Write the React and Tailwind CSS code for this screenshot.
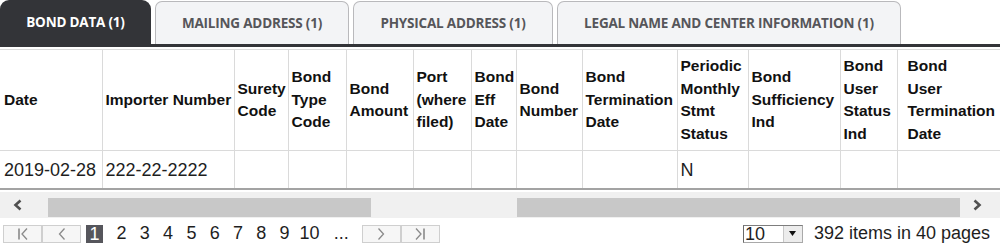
import React from 'react';

const tabs = [
  { label: 'BOND DATA (1)', w: 'w-[151px]', active: true },
  { label: 'MAILING ADDRESS (1)', w: 'w-[194px]' },
  { label: 'PHYSICAL ADDRESS (1)', w: 'w-[200px]' },
  { label: 'LEGAL NAME AND CENTER INFORMATION (1)', w: 'w-[344px]' },
];

const columns = [
  { title: 'Date', w: 'w-[102px]', nowrap: true, first: true },
  { title: 'Importer Number', w: 'w-[132px]', nowrap: true },
  { title: 'Surety Code', w: 'w-[54px]' },
  { title: 'Bond Type Code', w: 'w-[58px]' },
  { title: 'Bond Amount', w: 'w-[67px]' },
  { title: 'Port (where filed)', w: 'w-[58px]' },
  { title: 'Bond Eff Date', w: 'w-[45px]' },
  { title: 'Bond Number', w: 'w-[66px]' },
  { title: 'Bond Termination Date', w: 'w-[95px]' },
  { title: 'Periodic Monthly Stmt Status', w: 'w-[71px]' },
  { title: 'Bond Sufficiency Ind', w: 'w-[92px]' },
  { title: 'Bond User Status Ind', w: 'w-[57px]' },
  { title: 'Bond User Termination Date', w: 'w-[103px]', last: true },
];

const row = ['2019-02-28', '222-22-2222', '', '', '', '', '', '', '', 'N', '', '', ''];

const Chevron = ({ dir = 'left' }) => (
  <svg width="12" height="12" viewBox="0 0 12 12">
    <path
      d={dir === 'left' ? 'M8.5 1.5 L3.5 6 L8.5 10.5' : 'M3.5 1.5 L8.5 6 L3.5 10.5'}
      fill="none"
      stroke="currentColor"
      strokeWidth="2.6"
    />
  </svg>
);

const PagerIcon = ({ kind }) => (
  <svg width="14" height="14" viewBox="0 0 14 14" className="text-[#8a8a8a]">
    {kind === 'first' && (
      <>
        <path d="M3 1.5 V12.5" stroke="currentColor" strokeWidth="1.6" />
        <path d="M11 1.5 L6 7 L11 12.5" fill="none" stroke="currentColor" strokeWidth="1.3" />
      </>
    )}
    {kind === 'prev' && <path d="M9.5 1.5 L4.5 7 L9.5 12.5" fill="none" stroke="currentColor" strokeWidth="1.3" />}
    {kind === 'next' && <path d="M4.5 1.5 L9.5 7 L4.5 12.5" fill="none" stroke="currentColor" strokeWidth="1.3" />}
    {kind === 'last' && (
      <>
        <path d="M3 1.5 L8 7 L3 12.5" fill="none" stroke="currentColor" strokeWidth="1.3" />
        <path d="M11 1.5 V12.5" stroke="currentColor" strokeWidth="1.6" />
      </>
    )}
  </svg>
);

const PagerButton = ({ kind }) => (
  <button className="w-[39px] h-[18px] flex items-center justify-center bg-[#f6f6f6] border border-[#cfcfcf]">
    <PagerIcon kind={kind} />
  </button>
);

export default function App() {
  return (
    <div className="w-[1000px] h-[247px] bg-white overflow-hidden font-['Liberation_Sans',Arial,sans-serif]">
      {/* tabs */}
      <div className="flex items-end gap-[4px] h-[44px]">
        {tabs.map((t) =>
          t.active ? (
            <div
              key={t.label}
              className={`${t.w} h-[44px] rounded-t-[9px] bg-[#333438] text-white flex items-center justify-center font-['Open_Sans',sans-serif] font-bold text-[13.5px] tracking-[-0.2px]`}
            >
              {t.label}
            </div>
          ) : (
            <div
              key={t.label}
              className={`${t.w} h-[43px] rounded-t-[7px] bg-[#f3f4f6] border border-b-0 border-[#b9b9bc] text-[#56565a] flex items-center justify-center font-['Open_Sans',sans-serif] font-bold text-[13.5px] tracking-[-0.2px]`}
            >
              {t.label}
            </div>
          )
        )}
      </div>
      <div className="h-[3px] bg-[#333438]" />

      {/* grid */}
      <div className="mt-[2px] w-[1000px] overflow-hidden">
        <table className="table-fixed border-collapse w-[1000px]">
          <colgroup>
            {columns.map((c) => (
              <col key={c.title} className={c.w} />
            ))}
          </colgroup>
          <thead>
            <tr className="h-[101px]">
              {columns.map((c) => (
                <th
                  key={c.title}
                  className={`text-left align-middle border-t border-b border-[#dadada] ${
                    c.first ? 'pl-[4px]' : 'border-l pl-[3px]'
                  } ${c.last ? 'pl-[10px]' : ''} pr-[1px]`}
                >
                  <div
                    className={`font-['Liberation_Sans',Arial,sans-serif] font-bold text-[15.5px] leading-[22.5px] text-[#111] ${
                      c.nowrap ? 'whitespace-nowrap' : ''
                    } ${c.last ? 'w-[70px]' : ''}`}
                  >
                    {c.title}
                  </div>
                </th>
              ))}
            </tr>
          </thead>
          <tbody>
            <tr className="h-[38px]">
              {row.map((v, i) => (
                <td
                  key={i}
                  className={`align-middle pt-[2px] text-[18px] leading-[22px] text-[#1e1e1e] border-b-2 border-b-[#a3a3a3] ${
                    i === 0 ? 'pl-[4px]' : 'border-l border-l-[#dadada] pl-[3px]'
                  } whitespace-nowrap overflow-hidden`}
                >
                  {v}
                </td>
              ))}
            </tr>
          </tbody>
        </table>
      </div>

      {/* horizontal scrollbar */}
      <div className="mt-[2px] h-[26px] bg-[#f0f0f0] flex items-stretch">
        <div className="w-[48px] flex items-center pl-[12px] text-[#505050]">
          <Chevron dir="left" />
        </div>
        <div className="w-[912px] flex items-end pb-[1px]">
          <div className="w-[323px] h-[19px] bg-[#c8c8c8]" />
          <div className="w-[146px] h-[19px]" />
          <div className="w-[443px] h-[19px] bg-[#c8c8c8]" />
        </div>
        <div className="w-[40px] flex items-center pl-[11px] text-[#505050]">
          <Chevron dir="right" />
        </div>
      </div>

      {/* pager */}
      <div className="mt-[7px] h-[18px] flex items-center pl-[3px] pr-[10px] text-[18px] leading-[18px] text-[#1e1e1e]">
        <div className="flex">
          <PagerButton kind="first" />
          <PagerButton kind="prev" />
        </div>
        <div className="ml-[5px] flex items-center">
          <span className="h-[18px] px-[3.5px] bg-[#56565c] text-white leading-[19px] mr-[10px]">1</span>
          <div className="flex items-center gap-[6.3px]">
            {['2', '3', '4', '5', '6', '7', '8', '9', '10'].map((n) => (
              <span key={n} className="min-w-[17px] text-center leading-[19px]">
                {n}
              </span>
            ))}
            <span className="ml-[8px] leading-[19px]">...</span>
          </div>
        </div>
        <div className="ml-[13px] flex">
          <PagerButton kind="next" />
          <PagerButton kind="last" />
        </div>
        <div className="ml-auto flex items-center">
          <div className="w-[60px] h-[18px] flex border border-[#a9a9a9] border-l-[#6b6b6b] border-t-[#7d7d7d] bg-white">
            <span className="flex-1 pl-[1px] leading-[17px]">10</span>
            <span className="w-[19px] h-full bg-[#ececec] border-l border-[#c8c8c8] flex items-center justify-center">
              <svg width="7" height="5" viewBox="0 0 7 5">
                <path d="M0 0 H7 L3.5 5 Z" fill="#111" />
              </svg>
            </span>
          </div>
          <span className="ml-[11px] leading-[19px]">392 items in 40 pages</span>
        </div>
      </div>
    </div>
  );
}
